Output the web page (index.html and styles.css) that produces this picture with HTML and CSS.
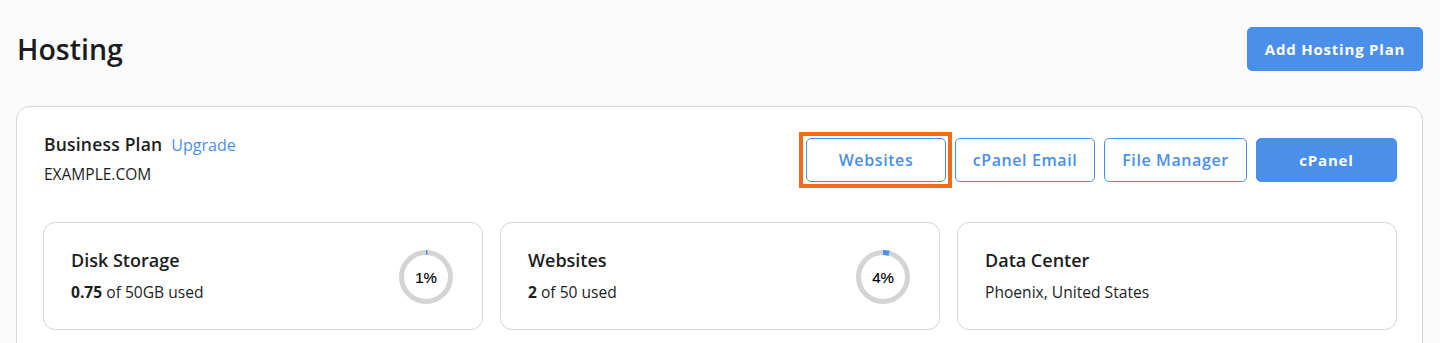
FILE: index.html
```html
<!DOCTYPE html>
<html>
<head>
<meta charset="utf-8">
<link rel="stylesheet" href="styles.css">
</head>
<body>
<div class="page">
  <header class="page-header">
    <h1 class="page-title">Hosting</h1>
    <button class="btn btn-primary btn-add">Add Hosting Plan</button>
  </header>
  <section class="plan-card">
    <div class="plan-top">
      <div class="plan-info">
        <div class="plan-name-row">
          <span class="plan-name">Business Plan</span>
          <a class="plan-upgrade">Upgrade</a>
        </div>
        <div class="plan-domain">EXAMPLE.COM</div>
      </div>
      <div class="plan-actions">
        <button class="btn btn-outline btn-focused">Websites</button>
        <button class="btn btn-outline">cPanel Email</button>
        <button class="btn btn-outline btn-wide">File Manager</button>
        <button class="btn btn-primary">cPanel</button>
      </div>
    </div>
    <div class="stats">
      <div class="stat">
        <div class="stat-text">
          <div class="stat-title">Disk Storage</div>
          <div class="stat-sub"><b>0.75</b> of 50GB used</div>
        </div>
        <div class="ring">
          <svg width="54" height="54" viewBox="0 0 54 54">
            <circle cx="27" cy="27" r="24.5" fill="none" stroke="#d4d4d4" stroke-width="5"/>
            <circle cx="27" cy="27" r="24.5" fill="none" stroke="#4a8fe8" stroke-width="5" stroke-dasharray="1.5 200" transform="rotate(-90 27 27)"/>
          </svg>
          <span class="ring-label">1%</span>
        </div>
      </div>
      <div class="stat">
        <div class="stat-text">
          <div class="stat-title">Websites</div>
          <div class="stat-sub"><b>2</b> of 50 used</div>
        </div>
        <div class="ring">
          <svg width="54" height="54" viewBox="0 0 54 54">
            <circle cx="27" cy="27" r="24.5" fill="none" stroke="#d4d4d4" stroke-width="5"/>
            <circle cx="27" cy="27" r="24.5" fill="none" stroke="#4a8fe8" stroke-width="5" stroke-dasharray="6.2 200" transform="rotate(-90 27 27)"/>
          </svg>
          <span class="ring-label">4%</span>
        </div>
      </div>
      <div class="stat">
        <div class="stat-text">
          <div class="stat-title">Data Center</div>
          <div class="stat-sub">Phoenix, United States</div>
        </div>
      </div>
    </div>
  </section>
</div>
</body>
</html>
```
FILE: styles.css
```css
* { box-sizing: border-box; }
html, body { margin: 0; padding: 0; }
body {
  background: #fafafa;
  font-family: "Open Sans", "Noto Sans", sans-serif;
  color: #1d1d1f;
  overflow: hidden;
}
.page {
  padding: 27px 17px 0 16px;
}
.page-header {
  display: flex;
  align-items: center;
  justify-content: space-between;
  height: 44px;
}
.page-title {
  margin: 0;
  font-size: 28.5px;
  font-weight: 600;
  line-height: 40px;
  color: #1b1c20;
  padding-left: 1px;
}
.btn {
  font-family: "Open Sans", "Noto Sans", sans-serif;
  height: 44px;
  border-radius: 5px;
  cursor: pointer;
  padding: 0;
}
.btn-primary {
  background: #4a8fe8;
  border: 1px solid #4a8fe8;
  color: #fff;
  font-size: 15px;
  font-weight: 700;
  letter-spacing: 0.8px;
  width: 141px;
}
.btn-add {
  width: 176px;
}
.btn-outline {
  background: #fff;
  border: 1px solid #4a8fe8;
  color: #4a8fe8;
  font-size: 16px;
  font-weight: 600;
  letter-spacing: 0.6px;
  width: 140px;
}
.btn-wide { width: 143px; }
.btn-focused {
  position: relative;
}
.btn-focused::after {
  content: "";
  position: absolute;
  top: -7px;
  right: -7px;
  bottom: -7px;
  left: -8px;
  border: 4px solid #f26b1d;
  pointer-events: none;
}
.plan-card {
  margin-top: 35px;
  background: #fff;
  border: 1px solid #d6d6d6;
  border-radius: 14px;
  padding: 31px 25px 40px 26px;
}
.plan-top {
  display: flex;
  justify-content: space-between;
  align-items: flex-start;
  height: 44px;
}
.plan-info {
  padding-left: 1px;
  margin-top: -1px;
}
.plan-name-row {
  display: flex;
  align-items: baseline;
  gap: 9px;
  height: 14px;
  line-height: 14px;
}
.plan-name {
  font-size: 17.5px;
  font-weight: 600;
  letter-spacing: 0.2px;
  color: #1d1d1f;
}
.plan-upgrade {
  font-size: 16px;
  color: #4a8fe8;
}
.plan-domain {
  margin-top: 15px;
  font-size: 15.5px;
  height: 16px;
  line-height: 16px;
  color: #1d1d1f;
}
.plan-actions {
  display: flex;
  gap: 9px;
}
.stats {
  margin-top: 40px;
  display: grid;
  grid-template-columns: repeat(3, 1fr);
  gap: 17px;
}
.stat {
  height: 108px;
  border: 1px solid #d6d6d6;
  border-radius: 12px;
  padding: 0 29px 1px 27px;
  display: flex;
  align-items: center;
  justify-content: space-between;
}
.stat-title {
  font-size: 18px;
  font-weight: 600;
  line-height: 24px;
  color: #1d1d1f;
}
.stat-sub {
  margin-top: 9px;
  font-size: 15.6px;
  line-height: 22px;
  color: #1d1d1f;
}
.stat-sub b { font-weight: 700; }
.ring {
  position: relative;
  width: 54px;
  height: 54px;
  margin-top: 3px;
}
.ring svg { display: block; }
.ring-label {
  position: absolute;
  inset: 0;
  display: flex;
  align-items: center;
  justify-content: center;
  font-family: "Liberation Sans", Arial, sans-serif;
  font-size: 15px;
  font-weight: 400;
  color: #000;
  -webkit-text-stroke: 0.2px #000;
}
```
